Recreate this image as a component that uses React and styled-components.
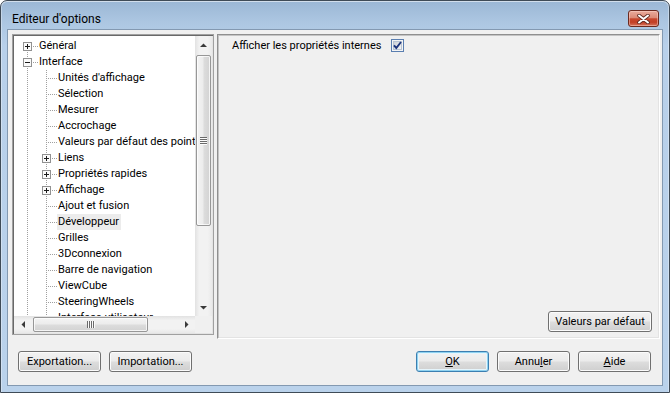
import React from "react";
import styled, { createGlobalStyle, css } from "styled-components";

const FONT = `Roboto, "Liberation Sans", Arial, sans-serif`;

const GlobalStyle = createGlobalStyle`
  html, body { margin: 0; padding: 0; background: #ffffff; }
  body { width: 670px; height: 393px; overflow: hidden; font-family: ${FONT}; font-size: 11px; color: #000; }
  *, *::before, *::after { box-sizing: border-box; }
`;

const Window = styled.div`
  width: 670px;
  height: 393px;
  display: flex;
  flex-direction: column;
  padding: 0 6px 6px;
  border: 1px solid #3f4b57;
  border-radius: 7px 7px 0 0;
  background: linear-gradient(to bottom, #9bb7d5 0px, #adc7e2 22px, #b8d0ea 45px, #bad2eb 100%);
  box-shadow: inset 0 1px 0 rgba(255, 255, 255, 0.55), inset 1px 0 0 rgba(255, 255, 255, 0.35),
    inset -1px 0 0 rgba(255, 255, 255, 0.35);
`;

const TitleBar = styled.div`
  height: 28px;
  flex: none;
  display: flex;
  align-items: flex-start;
  justify-content: space-between;
  padding: 9px 4px 0 5px;
`;

const Title = styled.div`
  font-size: 12px;
  line-height: 17px;
  padding-top: 1px;
  color: #000;
`;

const CloseButton = styled.div`
  width: 31px;
  height: 17px;
  border: 1px solid #6b2a1f;
  border-radius: 3px;
  background: linear-gradient(to bottom, #e9ab9c 0%, #dc8a76 45%, #c8472d 52%, #c23f26 75%, #d7745c 100%);
  box-shadow: inset 0 0 0 1px rgba(255, 220, 210, 0.45);
  display: flex;
  align-items: center;
  justify-content: center;
`;

const Client = styled.div`
  flex: 1;
  display: flex;
  flex-direction: column;
  background: #f0f0f0;
  border: 1px solid #8399b1;
  padding: 4px 2px 0 4px;
`;

const TopArea = styled.div`
  display: flex;
  align-items: flex-start;
  gap: 3px;
`;

const TreeBox = styled.div`
  width: 202px;
  height: 301px;
  flex: none;
  border: 1px solid #a0a0a0;
  box-shadow: inset 1px 1px 0 #696969, inset -1px -1px 0 #e3e3e3;
  padding: 1px;
  background: #fff;
  display: grid;
  grid-template-columns: 181px 17px;
  grid-template-rows: 280px 17px;
`;

const TreeList = styled.div`
  overflow: hidden;
  padding: 2px 0 0 5px;
  background: #fff;
`;

const Row = styled.div`
  display: flex;
  align-items: center;
  height: 16px;
  white-space: nowrap;
`;

const GuideSvg = styled.svg`
  flex: none;
  display: block;
`;

const Label = styled.span`
  display: inline-block;
  height: 16px;
  line-height: 16px;
  padding: 0 2px 0 1px;
  color: #000;
  ${(p) =>
    p.$selected &&
    css`
      background: #ececec;
    `}
`;

const VScroll = styled.div`
  display: flex;
  flex-direction: column;
  background: linear-gradient(to right, #e2e2e2 0%, #f2f2f2 25%, #f2f2f2 75%, #e9e9e9 100%);
`;

const HScroll = styled.div`
  display: flex;
  flex-direction: row;
  background: linear-gradient(to bottom, #e2e2e2 0%, #f2f2f2 25%, #f2f2f2 75%, #e9e9e9 100%);
`;

const Corner = styled.div`
  background: #f0f0f0;
`;

const ArrowBox = styled.div`
  width: 17px;
  height: 17px;
  flex: none;
  display: flex;
  align-items: center;
  justify-content: center;
`;

const Track = styled.div`
  flex: 1;
  display: flex;
  flex-direction: ${(p) => (p.$horizontal ? "row" : "column")};
  padding: ${(p) => (p.$horizontal ? "1px 0 1px 2px" : "2px 1px 0 1px")};
`;

const Thumb = styled.div`
  flex: none;
  border: 1px solid #979797;
  border-radius: 2px;
  display: flex;
  align-items: center;
  justify-content: center;
  box-shadow: inset 0 0 0 1px rgba(255, 255, 255, 0.75);
  ${(p) =>
    p.$horizontal
      ? css`
          width: 115px;
          height: 15px;
          background: linear-gradient(to bottom, #f4f4f4 0%, #ececec 45%, #dcdcdc 55%, #d2d2d2 100%);
        `
      : css`
          width: 15px;
          height: 171px;
          background: linear-gradient(to right, #f4f4f4 0%, #ececec 45%, #dcdcdc 55%, #d2d2d2 100%);
        `}
`;

const RightPanel = styled.div`
  width: 443px;
  height: 305px;
  flex: none;
  border: 1px solid;
  border-color: #8f8f8f #ffffff #ffffff #8f8f8f;
  box-shadow: inset 1px 1px 0 #c4c4c4, inset -1px -1px 0 #e3e3e3;
  padding: 2px 7px 6px 14px;
  display: flex;
  flex-direction: column;
  justify-content: space-between;
`;

const OptionRow = styled.label`
  display: flex;
  align-items: center;
  height: 17px;
  gap: 10px;
  color: #000;
`;

const OptionText = styled.span`
  line-height: 16px;
`;

const PanelFooter = styled.div`
  display: flex;
  justify-content: flex-end;
`;

const ButtonBar = styled.div`
  display: flex;
  justify-content: space-between;
  padding: 12px 9px 0 6px;
`;

const ButtonGroup = styled.div`
  display: flex;
  gap: ${(p) => p.$gap || 8}px;
`;

const Button = styled.button`
  width: ${(p) => p.$w}px;
  height: ${(p) => p.$h || 21}px;
  padding: 0;
  font-family: ${FONT};
  font-size: 11px;
  color: #000;
  border: 1px solid #707070;
  border-radius: 3px;
  background: linear-gradient(to bottom, #f2f2f2 0%, #ebebeb 48%, #dddddd 52%, #cfcfcf 100%);
  box-shadow: inset 0 0 0 1px #fbfbfb;
  ${(p) =>
    p.$default &&
    css`
      border-color: #3c7fb1;
      background: linear-gradient(to bottom, #f2f2f2 0%, #ebebeb 48%, #dddddd 52%, #cfcfcf 100%);
      box-shadow: inset 0 0 0 1px #8fd2f0, inset 0 0 0 2px #e6f5fc;
    `}
  u {
    text-decoration: underline;
    text-underline-offset: 1px;
  }
`;

/* ---------- drawings ---------- */

function dotsV(x, y0, y1) {
  const out = [];
  for (let y = y0; y < y1; y++) if (y % 2 === 0) out.push(<rect key={`v${x}-${y}`} x={x} y={y} width="1" height="1" />);
  return out;
}
function dotsH(y, x0, x1) {
  const out = [];
  for (let x = x0; x < x1; x++) if (x % 2 === 0) out.push(<rect key={`h${y}-${x}`} x={x} y={y} width="1" height="1" />);
  return out;
}

function Guide({ top, bottom, h, box }) {
  return (
    <GuideSvg width="19" height="16" viewBox="0 0 19 16">
      <g fill="#a0a0a0">
        {top && dotsV(8, 0, box ? 4 : 8)}
        {bottom && dotsV(8, box ? 13 : 8, 16)}
        {(top || bottom) && !box && dotsV(8, 8, 9)}
        {h && dotsH(8, box ? 14 : 10, 19)}
      </g>
      {box && (
        <g>
          <rect x="4.5" y="4.5" width="8" height="8" fill="#fafafa" stroke="#919191" />
          <rect x="6" y="8" width="5" height="1" fill="#1b1b1b" />
          {box === "+" && <rect x="8" y="6" width="1" height="5" fill="#1b1b1b" />}
        </g>
      )}
    </GuideSvg>
  );
}

const Arrow = ({ dir }) => {
  const pts = {
    up: "0,4 3.5,0.5 7,4",
    down: "0,0 3.5,3.5 7,0",
    left: "4,0 0.5,3.5 4,7",
    right: "0,0 3.5,3.5 0,7",
  }[dir];
  const vertical = dir === "up" || dir === "down";
  return (
    <svg width={vertical ? 7 : 4} height={vertical ? 4 : 7} viewBox={vertical ? "0 0 7 4" : "0 0 4 7"}>
      <polygon points={pts} fill="#3a3a3a" />
    </svg>
  );
};

const GripV = () => (
  <svg width="7" height="8" viewBox="0 0 7 8">
    {[0, 2, 4, 6].map((y) => (
      <g key={y}>
        <rect x="0" y={y} width="7" height="1" fill="#6a6a6a" />
        <rect x="0" y={y + 1} width="7" height="1" fill="#fbfbfb" />
      </g>
    ))}
  </svg>
);

const GripH = () => (
  <svg width="8" height="7" viewBox="0 0 8 7">
    {[0, 2, 4, 6].map((x) => (
      <g key={x}>
        <rect x={x} y="0" width="1" height="7" fill="#6a6a6a" />
        <rect x={x + 1} y="0" width="1" height="7" fill="#fbfbfb" />
      </g>
    ))}
  </svg>
);

const CloseGlyph = () => (
  <svg width="13" height="10" viewBox="0 0 13 10">
    <path d="M2 1.5 L11 8.5 M11 1.5 L2 8.5" stroke="#5e2a22" strokeWidth="3.6" strokeLinecap="round" />
    <path d="M2 1.5 L11 8.5 M11 1.5 L2 8.5" stroke="#ffffff" strokeWidth="2" strokeLinecap="round" />
  </svg>
);

const CheckBox = () => (
  <svg width="13" height="13" viewBox="0 0 13 13">
    <defs>
      <linearGradient id="cbfill" x1="0" y1="0" x2="1" y2="1">
        <stop offset="0" stopColor="#cbcfd5" />
        <stop offset="1" stopColor="#f6f6f6" />
      </linearGradient>
    </defs>
    <rect x="0.5" y="0.5" width="12" height="12" fill="#f4f4f4" stroke="#5a7eb0" />
    <rect x="2.5" y="2.5" width="8" height="8" fill="url(#cbfill)" stroke="#b8c4d4" />
    <path d="M3 6.4 L5.3 9 L10 3" stroke="#1d347c" strokeWidth="1.9" fill="none" />
  </svg>
);

/* ---------- data ---------- */

const child = (label, extra = {}) => ({ label, level: 2, ...extra });

const items = [
  { label: "Général", level: 1, box: "+", first: true },
  { label: "Interface", level: 1, box: "-" },
  child("Unités d'affichage"),
  child("Sélection"),
  child("Mesurer"),
  child("Accrochage"),
  child("Valeurs par défaut des points"),
  child("Liens", { box: "+" }),
  child("Propriétés rapides", { box: "+" }),
  child("Affichage", { box: "+" }),
  child("Ajout et fusion"),
  child("Développeur", { selected: true }),
  child("Grilles"),
  child("3Dconnexion"),
  child("Barre de navigation"),
  child("ViewCube"),
  child("SteeringWheels"),
  child("Interface utilisateur"),
];

function TreeRow({ item }) {
  return (
    <Row>
      {item.level === 1 ? (
        <Guide top={!item.first} bottom h box={item.box} />
      ) : (
        <>
          <Guide top bottom />
          <Guide top bottom h box={item.box} />
        </>
      )}
      <Label $selected={item.selected}>{item.label}</Label>
    </Row>
  );
}

export default function App() {
  return (
    <>
      <GlobalStyle />
      <Window>
        <TitleBar>
          <Title>Editeur d'options</Title>
          <CloseButton>
            <CloseGlyph />
          </CloseButton>
        </TitleBar>
        <Client>
          <TopArea>
            <TreeBox>
              <TreeList>
                {items.map((it) => (
                  <TreeRow key={it.label} item={it} />
                ))}
              </TreeList>
              <VScroll>
                <ArrowBox>
                  <Arrow dir="up" />
                </ArrowBox>
                <Track>
                  <Thumb>
                    <GripV />
                  </Thumb>
                </Track>
                <ArrowBox>
                  <Arrow dir="down" />
                </ArrowBox>
              </VScroll>
              <HScroll>
                <ArrowBox>
                  <Arrow dir="left" />
                </ArrowBox>
                <Track $horizontal>
                  <Thumb $horizontal>
                    <GripH />
                  </Thumb>
                </Track>
                <ArrowBox>
                  <Arrow dir="right" />
                </ArrowBox>
              </HScroll>
              <Corner />
            </TreeBox>
            <RightPanel>
              <OptionRow>
                <OptionText>Afficher les propriétés internes</OptionText>
                <CheckBox />
              </OptionRow>
              <PanelFooter>
                <Button $w={104} $h={21}>Valeurs par défaut</Button>
              </PanelFooter>
            </RightPanel>
          </TopArea>
          <ButtonBar>
            <ButtonGroup $gap={8}>
              <Button $w={83}>Exportation...</Button>
              <Button $w={83}>Importation...</Button>
            </ButtonGroup>
            <ButtonGroup $gap={8}>
              <Button $w={73} $default>
                <u>O</u>K
              </Button>
              <Button $w={73}>
                Annu<u>l</u>er
              </Button>
              <Button $w={73}>
                <u>A</u>ide
              </Button>
            </ButtonGroup>
          </ButtonBar>
        </Client>
      </Window>
    </>
  );
}
